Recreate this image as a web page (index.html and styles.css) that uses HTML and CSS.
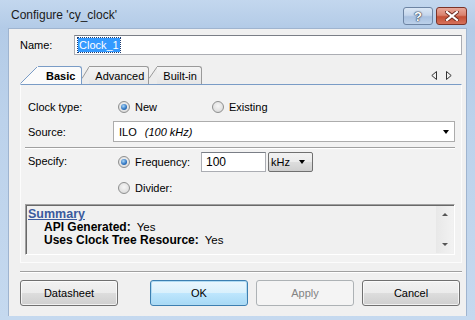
FILE: index.html
```html
<!DOCTYPE html>
<html>
<head>
<meta charset="utf-8">
<link rel="stylesheet" href="styles.css">
</head>
<body>
<div class="window">
  <div class="titlebar">
    <span class="title">Configure 'cy_clock'</span>
    <div class="caption-btns">
      <span class="cbtn help">?</span>
      <span class="cbtn close"><svg width="14" height="10" viewBox="0 0 14 10"><path d="M2 1 L12 9 M12 1 L2 9" stroke="#6b2a20" stroke-width="4" stroke-linecap="square"/><path d="M2 1 L12 9 M12 1 L2 9" stroke="#fff" stroke-width="2.2" stroke-linecap="square"/></svg></span>
    </div>
  </div>
  <div class="client">
    <div class="name-row">
      <span class="name-label">Name:</span>
      <div class="textbox name-input"><span class="sel">Clock_1</span></div>
    </div>
    <div class="tabs-row">
      <div class="tabs">
        <span class="slope slope-first"><svg width="18" height="18" viewBox="0 0 18 18"><path d="M0 18 L17 1 L18 1 L18 18 Z" fill="#fbfbfb"/><path d="M0.5 17.5 L17 1" stroke="#7a9cc6" stroke-width="1" fill="none"/></svg></span>
        <span class="tab active">Basic</span>
        <span class="slope"><svg width="7" height="18" viewBox="0 0 7 18"><path d="M0 12 L7 1 L7 18 L0 18 Z" fill="#ececec"/><path d="M0 12.5 L7 1" stroke="#9a9a9a" stroke-width="1" fill="none"/></svg></span>
        <span class="tab">Advanced</span>
        <span class="slope"><svg width="8" height="18" viewBox="0 0 8 18"><path d="M0 12 L8 1 L8 18 L0 18 Z" fill="#ececec"/><path d="M0 12.5 L8 1" stroke="#9a9a9a" stroke-width="1" fill="none"/></svg></span>
        <span class="tab">Built-in</span>
      </div>
      <div class="tab-arrows">
        <svg width="6" height="9" viewBox="0 0 6 9"><path d="M5.5 0.5 L0.8 4.5 L5.5 8.5 Z" fill="none" stroke="#333" stroke-width="1"/></svg>
        <svg width="6" height="9" viewBox="0 0 6 9"><path d="M0.5 0.5 L5.2 4.5 L0.5 8.5 Z" fill="none" stroke="#333" stroke-width="1"/></svg>
      </div>
    </div>
    <div class="panel">
      <div class="row clock-row">
        <span class="lbl">Clock type:</span>
        <span class="opt opt-new"><span class="radio on"></span>New</span>
        <span class="opt"><span class="radio"></span>Existing</span>
      </div>
      <div class="row source-row">
        <span class="lbl">Source:</span>
        <div class="combo">
          <span class="combo-text">ILO <em>(100 kHz)</em></span>
          <span class="arrow"></span>
        </div>
      </div>
      <div class="hsep"></div>
      <div class="row spec-row">
        <span class="lbl lbl-spec">Specify:</span>
        <span class="opt opt-freq"><span class="radio on"></span>Frequency:</span>
        <div class="textbox freq-input">100</div>
        <div class="unit-combo"><span>kHz</span><span class="arrow"></span></div>
      </div>
      <div class="row div-row">
        <span class="lbl"></span>
        <span class="opt"><span class="radio"></span>Divider:</span>
      </div>
      <div class="summary">
        <div class="summary-text">
          <div class="sum-title">Summary</div>
          <div class="sum-line"><b>API Generated:</b> Yes</div>
          <div class="sum-line"><b>Uses Clock Tree Resource:</b> Yes</div>
        </div>
        <div class="vscroll">
          <span class="sarrow up"></span>
          <span class="sarrow down"></span>
        </div>
      </div>
    </div>
    <div class="bsep"></div>
    <div class="buttons">
      <span class="btn">Datasheet</span>
      <span class="btn default">OK</span>
      <span class="btn disabled">Apply</span>
      <span class="btn">Cancel</span>
    </div>
  </div>
</div>
</body>
</html>
```
FILE: styles.css
```css
* { box-sizing: border-box; }
html, body { margin: 0; padding: 0; }
body {
  width: 475px;
  height: 320px;
  overflow: hidden;
  font-family: "Liberation Sans", Arial, sans-serif;
  font-size: 11px;
  color: #000;
}
.window {
  width: 475px;
  height: 320px;
  background: linear-gradient(to bottom, #c3d7ee 0px, #b3cbe7 28px, #bcd2eb 120px, #c5d9ef 320px);
  display: flex;
  flex-direction: column;
}
.titlebar {
  height: 28px;
  display: flex;
  align-items: flex-start;
  justify-content: space-between;
  padding: 0 8px 0 11px;
}
.title {
  font-size: 12px;
  line-height: 12px;
  margin-top: 9px;
  color: #1a1a1a;
}
.caption-btns {
  display: flex;
  gap: 3px;
  margin-top: 7px;
}
.cbtn {
  height: 18px;
  border: 1px solid #6d84a3;
  border-radius: 3px;
  display: flex;
  align-items: center;
  justify-content: center;
}
.help {
  width: 30px;
  background: linear-gradient(to bottom, #dbe7f5 0%, #c5d6ec 45%, #a9c1e0 55%, #bcd1ea 100%);
  color: #fff;
  font-weight: bold;
  font-size: 13px;
  text-shadow: 0 0 1px #2b3c55, 0 0 1px #2b3c55, 0 0 2px #2b3c55;
}
.close {
  width: 31px;
  border-color: #7b3328;
  background: linear-gradient(to bottom, #e8a799 0%, #d9826e 45%, #c44f35 55%, #d6715a 100%);
}
.client {
  margin: 0 8px;
  height: 288px;
  background: #f0f0f0;
  border: 1px solid #9fb4cf;
  border-bottom: none;
  padding: 6px 4px 0 11px;
  display: flex;
  flex-direction: column;
}
.name-row {
  display: flex;
  align-items: center;
  height: 20px;
}
.name-label { width: 54px; }
.textbox {
  background: #fff;
  border: 1px solid #abadb3;
  border-top-color: #7a7e86;
  height: 20px;
  display: flex;
  align-items: center;
  padding-left: 3px;
}
.name-input { width: 388px; }
.sel {
  background: #3399ff;
  color: #fff;
  line-height: 14px;
  padding: 0 1px;
  outline: 1px dotted #1a3a70;
}
.tabs-row {
  margin-top: 11px;
  height: 18px;
  width: 442px;
  display: flex;
  justify-content: space-between;
}
.tabs {
  display: flex;
  align-items: flex-end;
}
.slope { display: flex; height: 18px; }
.slope svg { display: block; }
.tab {
  height: 18px;
  border-top: 1px solid #9a9a9a;
  border-right: 1px solid #9a9a9a;
  border-top-right-radius: 3px;
  background: linear-gradient(to bottom, #f4f4f4, #e6e6e6);
  display: flex;
  align-items: center;
  padding: 1px 4px 0 6px;
}
.tab.active {
  background: #fbfbfb;
  border-color: #7a9cc6;
  font-weight: bold;
  padding: 1px 6px 0 8px;
  position: relative;
  z-index: 1;
}
.tab-arrows {
  display: flex;
  gap: 9px;
  padding: 5px 10px 0 0;
}
.tab-arrows svg { display: block; }
.panel {
  width: 442px;
  height: 179px;
  border: 1px solid #fcfcfc;
  border-top: 1px solid #7a9cc6;
  background: #f2f2f2;
  padding: 12px 6px 0 4px;
  display: flex;
  flex-direction: column;
}
.row {
  display: flex;
  align-items: center;
}
.lbl {
  width: 88px;
  padding-left: 3px;
  flex: none;
}
.clock-row { height: 20px; }
.opt {
  display: flex;
  align-items: center;
}
.opt-new { width: 94px; margin-left: 5px; }
.radio {
  width: 12px;
  height: 12px;
  border-radius: 50%;
  border: 1px solid #8e8f8f;
  background: radial-gradient(circle at 50% 40%, #f6f6f6 0%, #e2e2e2 60%, #d0d0d0 100%);
  margin-right: 5px;
  display: flex;
  align-items: center;
  justify-content: center;
  flex: none;
}
.radio.on::after {
  content: "";
  width: 6px;
  height: 6px;
  border-radius: 50%;
  background: radial-gradient(circle at 40% 35%, #a9d6f7 0%, #2b72c0 60%, #1c4e8c 100%);
}
.source-row { margin-top: 4px; height: 21px; }
.combo {
  width: 342px;
  height: 21px;
  background: #fff;
  border: 1px solid #acacac;
  display: flex;
  align-items: center;
  justify-content: space-between;
  padding: 0 5px 0 5px;
}
.combo em { margin-left: 5px; }
.arrow {
  width: 0;
  height: 0;
  border-left: 3.5px solid transparent;
  border-right: 3.5px solid transparent;
  border-top: 4px solid #000;
}
.hsep {
  margin-top: 5px;
  height: 2px;
  border-top: 1px solid #a0a0a0;
  border-bottom: 1px solid #fff;
}
.spec-row { margin-top: 3px; height: 20px; }
.lbl-spec { padding-bottom: 2px; }
.opt-freq { margin-left: 5px; width: 83px; }
.freq-input { width: 65px; padding-left: 4px; font-size: 12px; }
.unit-combo {
  margin-left: 2px;
  width: 45px;
  height: 20px;
  border: 1px solid #707070;
  border-radius: 2px;
  background: linear-gradient(to bottom, #f2f2f2 0%, #ebebeb 50%, #dddddd 51%, #cfcfcf 100%);
  display: flex;
  align-items: center;
  justify-content: space-between;
  padding: 0 7px 0 2px;
}
.div-row { margin-top: 6px; height: 19px; }
.div-row .opt { margin-left: 5px; }
.summary {
  margin-top: 7px;
  height: 51px;
  border: 1px solid #a0a0a0;
  border-right-color: #fff;
  border-bottom-color: #fff;
  box-shadow: inset 1px 1px 0 #696969;
  background: #f0f0f0;
  display: flex;
  justify-content: space-between;
}
.summary-text {
  padding: 3px 0 0 2px;
  font-size: 12px;
  line-height: 13px;
}
.sum-title {
  font-weight: bold;
  color: #3b5a9e;
  text-decoration: underline;
  font-size: 12.5px;
}
.sum-line {
  padding-left: 16px;
  font-size: 11.5px;
}
.sum-line b { font-size: 12px; margin-right: 3px; }
.vscroll {
  width: 17px;
  margin: 1px 1px 1px 0;
  background: linear-gradient(to right, #e8e8e8, #f2f2f2);
  display: flex;
  flex-direction: column;
  justify-content: space-between;
  align-items: center;
  padding: 7px 0 7px;
}
.sarrow {
  width: 0;
  height: 0;
  border-left: 3px solid transparent;
  border-right: 3px solid transparent;
}
.sarrow.up { border-bottom: 3px solid #555; }
.sarrow.down { border-top: 3px solid #555; }
.bsep {
  margin-top: 8px;
  width: 442px;
  height: 2px;
  border-top: 1px solid #a0a0a0;
  border-bottom: 1px solid #fff;
}
.buttons {
  margin-top: 7px;
  display: flex;
  width: 440px;
}
.btn {
  width: 98px;
  height: 26px;
  border: 1px solid #707070;
  border-radius: 3px;
  background: linear-gradient(to bottom, #f2f2f2 0%, #ebebeb 50%, #dddddd 51%, #cfcfcf 100%);
  display: flex;
  align-items: center;
  justify-content: center;
  box-shadow: inset 0 0 0 1px rgba(255,255,255,0.7);
}
.btn + .btn { margin-left: 8px; }
.btn.default {
  margin-left: 32px;
  border-color: #3c7fb1;
  background: linear-gradient(to bottom, #eaf6fd 0%, #d9f0fc 50%, #bee6fd 51%, #a7d9f5 100%);
  box-shadow: inset 0 0 0 1px #b0dbf3;
}
.btn.disabled {
  border-color: #adb2b5;
  background: #f4f4f4;
  color: #838383;
  box-shadow: none;
}
```
